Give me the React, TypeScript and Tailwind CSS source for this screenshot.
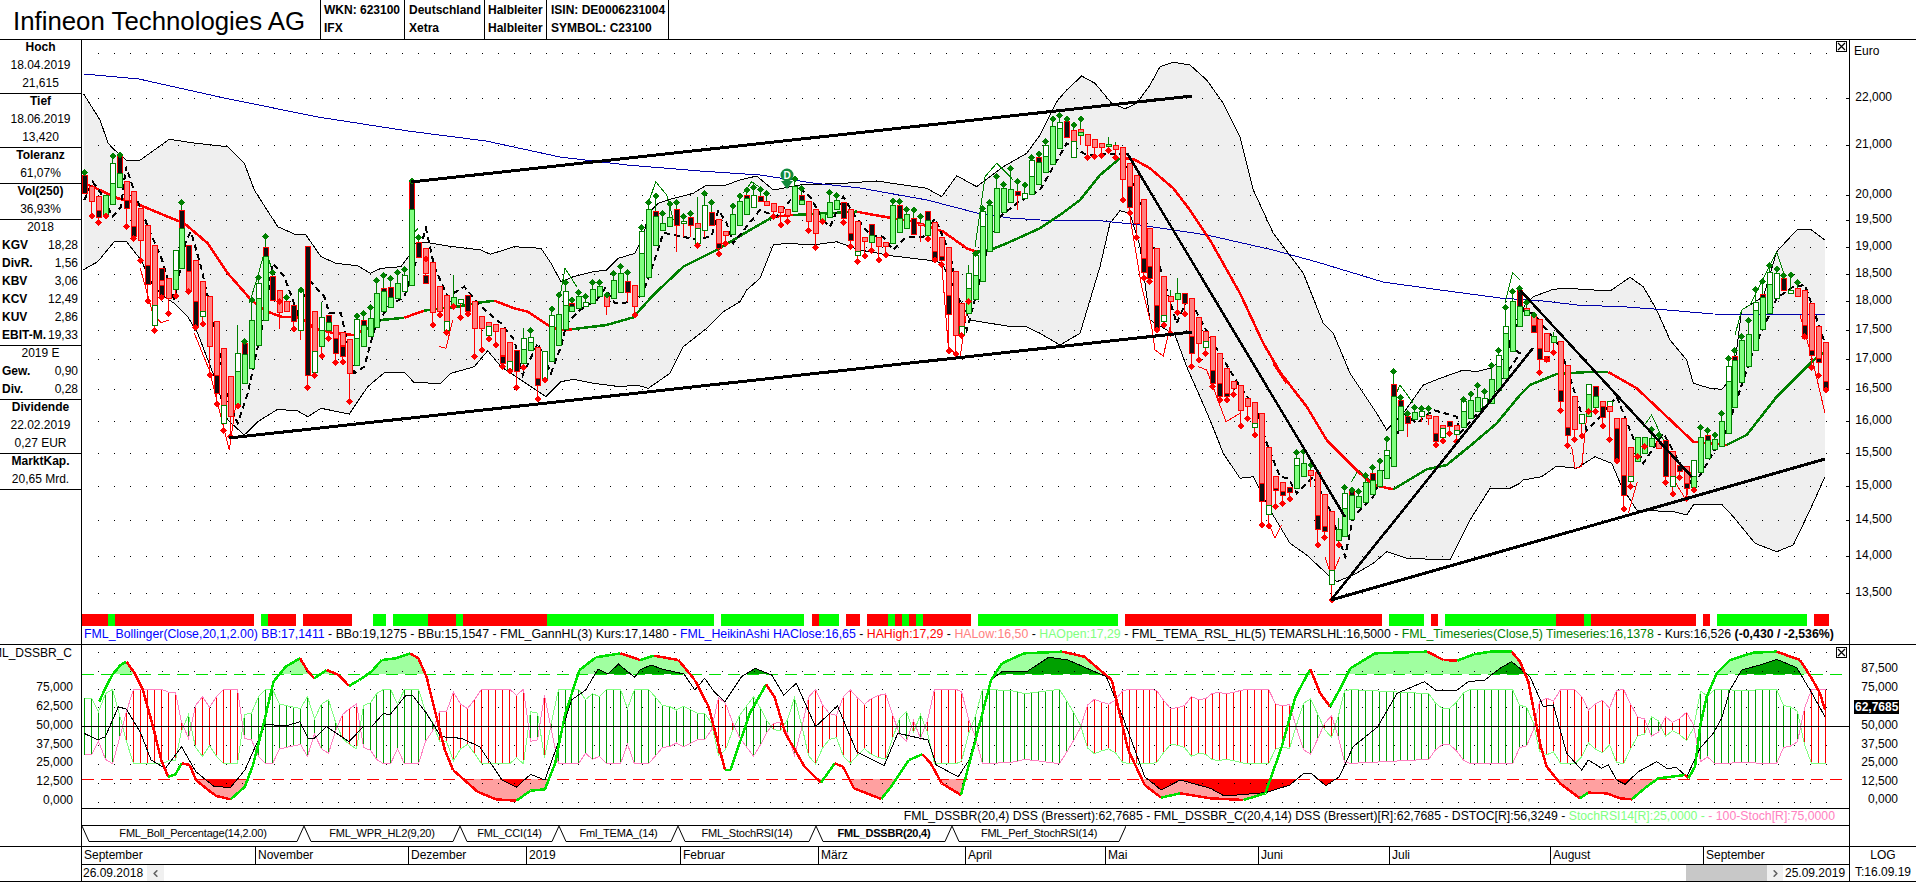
import { ChevronLeft, ChevronRight } from 'lucide-react';

type Pt = [number, number];

// readings were taken from crops, so every series carries its crop origin and scale
const Z = (ox: number, oy: number, sx: number, sy: number) => (p: number[]): Pt[] => {
  const out: Pt[] = [];
  for (let i = 0; i < p.length; i += 2) out.push([ox + p[i] / sx, oy + p[i + 1] / sy]);
  return out;
};
const z1 = Z(0, 0, 2.45, 3);
const z2 = Z(0, 220, 2.45, 3);
const z3 = Z(0, 590, 2.45, 3);
const z4 = Z(1500, 590, 3, 3);
const z5 = Z(640, 600, 1.823, 3);
const z6 = Z(1500, 200, 3, 3);
const z7 = Z(81, 100, 3, 3);
const z8 = Z(560, 80, 3, 3);
const z9 = Z(1040, 60, 3, 3);
const z10 = Z(1040, 300, 3, 3);

const pts = (l: Pt[]) => l.map(([x, y]) => `${x.toFixed(1)},${y.toFixed(1)}`).join(' ');

const upperBand: Pt[] = [
  ...z1([205, 282, 245, 360, 265, 430]),
  ...z7([95, 145, 135, 180, 178, 180, 265, 118, 345, 130, 440, 140, 490, 190, 520, 270, 590, 380, 640, 402, 675, 405, 720, 470, 765, 490, 830, 497, 868, 520, 900, 505, 960, 500, 990, 460, 1000, 430, 1040, 428, 1100, 438, 1200, 450, 1228, 463, 1300, 440, 1380, 445, 1410, 490, 1440, 545]),
  ...z8([40, 590, 100, 575, 140, 570, 175, 535, 225, 520, 250, 470, 265, 400, 295, 370, 330, 358, 400, 340, 440, 315, 490, 318, 540, 300, 590, 288, 640, 330, 720, 315, 850, 310, 950, 303, 1100, 325, 1145, 350, 1190, 287, 1250, 320, 1330, 260, 1400, 220, 1440, 165]),
  ...z9([50, 125, 80, 90, 125, 48, 165, 70, 215, 130, 255, 146, 290, 130, 330, 75, 360, 20, 400, 7, 450, 15, 500, 60, 550, 130, 600, 230, 640, 390, 700, 520, 790, 640, 850, 790, 880, 820, 930, 940, 1010, 1060]),
  ...z10([1040, 390, 1090, 340, 1150, 255, 1200, 235, 1270, 210, 1310, 215, 1350, 205, 1400, 170]),
  [1510, 340],
  [1525, 305],
  ...z6([100, 290, 160, 268, 200, 265, 330, 273, 390, 232, 430, 260, 470, 330, 510, 420, 560, 480, 580, 550, 630, 565, 665, 568, 700, 530, 725, 330, 790, 290, 830, 155, 890, 90, 930, 87, 975, 120]),
];

const lowerBand: Pt[] = [
  ...z2([207, 148]),
  ...z7([10, 508, 50, 485, 100, 425, 135, 423, 180, 480, 215, 555, 250, 590, 280, 610, 320, 650, 350, 700, 400, 830, 440, 960, 490, 1005, 530, 965, 590, 928, 650, 933, 680, 950, 720, 925, 805, 942, 860, 860, 910, 818, 970, 817, 1000, 848, 1080, 850, 1110, 820, 1180, 800, 1220, 752, 1260, 800, 1320, 840, 1395, 890, 1440, 845]),
  ...z8([40, 898, 100, 910, 180, 920, 230, 915, 265, 925, 330, 880, 370, 800, 440, 745, 490, 695, 540, 665, 560, 630, 600, 595, 640, 495, 680, 490, 760, 495, 830, 485, 900, 510, 1000, 528, 1100, 540, 1145, 548, 1230, 720, 1340, 738, 1395, 738, 1440, 760]),
  ...z9([60, 855, 120, 820, 150, 720, 180, 620, 210, 490, 240, 452, 270, 460, 300, 560, 330, 780, 405, 825, 440, 920, 480, 1010, 510, 1080]),
  ...z10([550, 460, 600, 535, 640, 530, 690, 630, 750, 730, 800, 765, 870, 830, 890, 845, 940, 825, 1000, 790, 1040, 755, 1100, 775, 1230, 780, 1290, 660, 1350, 565, 1410, 565, 1440, 550]),
  ...z6([70, 840, 125, 830, 170, 798, 230, 805, 285, 770, 335, 790, 365, 860, 410, 930, 520, 935, 560, 945, 580, 915, 665, 913, 700, 950, 765, 1030, 830, 1055, 880, 1035, 930, 930, 975, 830]),
];

const blueLine: Pt[] = [
  [84, 74], [139, 79], [224, 98], [318, 117], [408, 131], [486, 141], [560, 157], [627, 165], [700, 171], [760, 175],
  [813, 183], [860, 188], [927, 200], [977, 213], [1010, 218], [1040, 220], [1103, 221], [1140, 225], [1207, 235],
  [1273, 250], [1317, 262], [1383, 282], [1440, 290], [1500, 298], [1543, 301], [1577, 305], [1627, 307], [1667, 310],
  [1713, 314], [1825, 315],
];

const dashed: Pt[] = [
  ...z7([10, 300, 35, 245, 60, 280, 95, 350, 120, 320, 135, 200, 165, 290, 200, 380, 240, 470, 280, 600, 315, 420, 330, 395, 360, 500, 405, 700, 440, 900, 470, 970, 500, 880, 550, 650, 575, 490, 610, 530, 650, 640, 685, 540, 730, 590, 745, 640, 780, 640, 820, 820, 850, 800, 880, 690, 920, 620, 970, 590, 1000, 500, 1035, 385, 1060, 500, 1100, 590, 1150, 560, 1200, 620, 1260, 670, 1300, 720, 1325, 825, 1370, 730, 1410, 820, 1440, 740]),
  ...z8([20, 730, 60, 690, 110, 660, 135, 625, 165, 670, 230, 665, 260, 610, 300, 490, 310, 458, 370, 470, 400, 478, 455, 470, 475, 390, 500, 430, 520, 490, 600, 390, 650, 410, 720, 325, 750, 350, 790, 420, 810, 440, 850, 350, 880, 400, 930, 465, 970, 470, 1000, 510, 1040, 470, 1090, 470, 1125, 415, 1170, 520, 1200, 680, 1220, 750, 1250, 640, 1290, 470, 1320, 410, 1370, 370, 1440, 330]),
  ...z9([80, 250, 140, 285, 240, 280, 290, 400, 320, 490, 380, 690, 410, 790, 440, 720]),
  ...z10([450, 0, 520, 130, 600, 260, 650, 330, 680, 430, 720, 530, 745, 535, 770, 580, 820, 530, 870, 630, 915, 770, 940, 650, 1000, 590, 1060, 450, 1090, 340, 1130, 370, 1180, 330, 1250, 350, 1260, 400, 1340, 310, 1440, 160]),
  ...z6([30, 440, 60, 330, 100, 340, 180, 440, 260, 690, 300, 650, 350, 590, 430, 790, 490, 700, 580, 860, 680, 690, 760, 450, 830, 295, 880, 260, 915, 255, 975, 430]),
];

const R = '#ff0000';
const G = '#008000';
const maRuns: [string, Pt[]][] = [
  [R, z7([10, 250, 45, 265, 110, 295, 150, 305, 200, 325, 260, 350, 310, 370, 380, 430, 440, 520, 480, 565, 510, 600, 560, 635, 600, 650, 660, 653, 700, 685, 760, 700, 820, 705, 850, 690])],
  [G, z7([850, 690, 900, 660, 970, 653])],
  [R, z7([970, 653, 1030, 632])],
  [G, z7([1030, 632, 1080, 625, 1130, 620, 1180, 610, 1240, 602])],
  [R, [...z7([1240, 602, 1300, 625, 1340, 635, 1400, 675]), ...z8([0, 750, 35, 748])]],
  [G, z8([35, 748, 140, 735, 220, 712, 280, 645, 370, 560, 470, 510, 570, 450, 640, 410])],
  [R, z8([640, 410, 700, 405])],
  [G, z8([700, 405, 800, 400, 890, 395])],
  [R, z8([890, 395, 960, 408, 1060, 425, 1150, 455, 1220, 505, 1250, 515])],
  [G, [...z8([1250, 515, 1290, 510, 1340, 490, 1440, 445]), ...z9([60, 465, 120, 420, 180, 345, 240, 295])]],
  [R, [...z9([240, 295, 280, 297, 330, 325, 400, 385, 450, 450, 510, 540, 600, 700, 670, 850, 740, 970]), ...z10([700, 190, 800, 320, 860, 420, 960, 520, 1000, 555, 1060, 568])]],
  [G, [...z10([1060, 568, 1160, 508, 1220, 495, 1300, 430, 1370, 370, 1440, 285]), ...z6([90, 555, 170, 522, 280, 515, 325, 516])]],
  [R, z6([325, 516, 410, 565, 490, 640, 580, 725, 680, 735])],
  [G, z6([680, 735, 740, 705, 830, 590, 930, 490, 970, 458])],
];

const thinRuns: [string, Pt[]][] = [
  [R, z7([178, 505, 215, 640, 240, 668, 265, 660])],
  [R, z7([340, 700, 385, 810, 445, 1050, 470, 875])],
  [G, z7([505, 610, 530, 530, 553, 445, 570, 500])],
  [R, z7([1075, 740, 1095, 745, 1115, 660])],
  [G, z7([990, 405, 1012, 385])],
  [G, z8([0, 650, 15, 565, 50, 620])],
  [G, z8([265, 370, 287, 305, 320, 345, 340, 420])],
  [G, z8([550, 340, 575, 305, 610, 330])],
  [R, z8([1145, 550, 1165, 800, 1200, 835, 1225, 660])],
  [G, z8([1245, 500, 1275, 290, 1310, 250, 1360, 300])],
  [R, z9([270, 470, 305, 680, 335, 800, 345, 870, 370, 888, 390, 800])],
  [R, z10([475, 200, 500, 210, 530, 290, 558, 365, 600, 340])],
  [R, z10([690, 680, 705, 715, 725, 675])],
  [G, z10([935, 545, 955, 510, 990, 540])],
  [R, z10([855, 770, 875, 830, 900, 770])],
  [G, z10([1060, 300, 1080, 255, 1120, 310])],
  [G, z9([1395, 730, 1418, 638, 1440, 660])],
  [R, z6([215, 740, 225, 805, 245, 800, 265, 600])],
  [R, z6([385, 940, 412, 845])],
  [R, z6([525, 845, 558, 900, 580, 780])],
  [G, z6([705, 405, 725, 330, 750, 315, 785, 245, 830, 155, 850, 215])],
  [R, z6([900, 345, 935, 470, 975, 640])],
  [G, z6([430, 680, 455, 645, 490, 720])],
];

const trendLines: [Pt, Pt, number][] = [
  [[229, 438], [1192, 332], 3],
  [[411, 182], [1192, 96], 3],
  [[1127, 153], [1345, 517], 2.5],
  [[1331, 600], [1533, 348], 2.5],
  [[1331, 600], [1825, 459], 3],
  [[1520, 290], [1692, 477], 2.5],
];

// one entry per trading day: marker y, then r/g/h/k body ranges and an optional w wick end
const barSections: [number, string][] = [
  [100, '218 k225-280|348 r258-305|368 r288-352 k330-352|348 g285-345|168 h190-250 g250-312|165 k170-220 g220-262|380 r245-325 k300-325|416 r275-410 k380-410|482 r325-420|603 r376-553 k495-553|692 r435-615 h615-675|593 r505-585 k505-540 k555-585|640 r535-595|588 h450-510 g510-568|308 k332-385 g385-505|575 k436-515 r515-570|682 r480-605 k605-680|672 r545-635 h635-650|825 r590-740|912 r665-825 k825-880|992 r745-915 h915-970|1010 r828-950|918 h760-815 g815-915 w675|725 k730-763 g763-850|600 g660-805|533 h550-595 g595-735|410 k442-470 g470-660|517 k530-600|605 r572-637 w688|593 r605-635|687 k615-665|570 h575-690 w720|863 k440-825|827 r635-755 h755-818|768 h652-690 g690-740 w605|715 k645-668 g668-690|788 r675-715 k715-760|786 r698-735 k740-768|905 r718-820|648 h658-715 g715-795|640 k660-675 g676-740|623 g655-708|542 g580-682|527 k565-575 g575-633|536 k562-592 g592-622|518 g550-595|508 h525-575|243 k245-328 g328-556|413 k427-472|477 r445-520 k525-550|675 r487-637|645 r560-635|698 r585-665 h665-690|620 g592-615 w525|653 h598-610|642 k585-635|770 r605-685|750 r648-685|717 r667-680 h680-705|735 r673-695|800 r685-765 k768-790|813 r727-785 h785-810|863 k752-815|803 h715-748 g748-790 w685|692 h712-727 g727-750|897 r742-835 k835-855|840 h755-838|627 h645-678 g678-785|585 g643-735'],
  [80, '607 h635-675 g675-748|660 k670-680 g680-695|638 g650-685|650 h668-680|607 g628-670|607 g620-650|645 r650-680 w705|580 g600-655|560 g580-638|578 k605-638 w665|705 r617-680|443 h455-520 g520-650|368 g388-592|348 k395-410 g410-497|400 g430-452|372 g412-440|368 k388-437 w515|410 h425-430 w470|400 k412-437 w470|497 r430-445 h445-490 w350|340 h376-450 w470|368 k398-437|522 r418-490 k490-505|490 r455-467|378 g403-462|348 g365-437|330 k347-355 g355-403|322 h347-383|328 k350-365|340 r365-375|410 r370-395|435 r378-398|425 r388-405|297 g320-395|325 k347-360 g360-372|452 r365-425|503 r388-460|425 g400-420|338 g367-412|347 g362-388|428 k368-415|500 r388-460 k460-480|545 r425-515 h515-525|528 r472-485|512 k433-465 g465-487|540 r472-500|525 r487-500|363 g375-490|365 k375-415 g415-458|388 g402-445|390 k415-462|410 r430-437 w485|477 k395-420 g420-465|540 r428-515 k515-535|553 r472-530 k530-540|813 r502-645 k645-703|822 r575-767|767 r670-740 h740-765|665 h580-625 g625-700 w555|520 h525-585 g585-658|385 h395-440 g440-605|367 g375-515|290 g325-457|313 g325-397|266 g328-368|305 k335-345 w390|315 h340-355|232 h240-290 g290-343|222 k232-247 g247-312'],
  [60, '245 h255-290 g290-337|177 g200-313|167 h187-205 g205-265|177 k185-232|195 r210-245 h245-292|177 r208-218 g218-225 w255|293 r222-257|290 r238-262|287 r250-263|272 g253-258 w232|293 r257-268 w245|420 r262-358|459 r310-380 k380-442|533 r345-490|654 r418-595 k595-637|665 r505-620 k620-655|810 r565-735 k735-805|795 r649-765 h765-785|820 r708-725 w690|758 g700-717 w655|762 k700-730|920 r715-830 k830-880|900 r772-850|880 r815-845 h845-863'],
  [300, '260 r108-210 k210-250|300 r160-250 k250-290|300 r205-280 k280-290|283 r245-265|378 r257-330|356 r295-320|405 r307-370 h370-383|675 r340-550 k550-605|678 r442-617 h617-643|620 r530-565 k565-570|611 r547-575 k575-585|597 k563-578|457 h475-495 g495-565|455 g490-530|495 r510-525 w560|735 r517-647 k647-688|713 r583-680 k680-695|900 r635-810 h810-853|735 g688-722 w655|563 h580-625 g625-708|570 k575-585 g585-658|575 g590-622|527 g548-607|502 k520-540 g540-583|483 g512-560|417 h450-467 g467-535|215 k253-290 g290-498|293 k300-320 g320-390|340 k348-370 w412|323 g338-358|325 h335-348 w365|326 r345-355 w375|435 r350-400 k400-425|423 r375-385 h385-413|400 k365-378|425 r375-390 h390-403|298 h305-335 g335-382|282 g300-355|257 g293-335|275 h295-320|197 g238-310|152 h165-200 g200-270'],
  [200, '323 h380-400 g400-535|275 g305-455|265 k272-318 g318-380|308 r325-330 g330-347|345 r350-375 k375-397|518 r358-445 k445-478|478 r400-455 k470-485|458 g410-428 w395|632 r425-572 k572-605|737 r497-683 k683-705|718 r590-688|708 h642-670|635 h553-583 g583-650|635 k560-590 g590-622|678 r605-620 k620-652|718 h605-620 r620-635|783 r655-685 k685-785|927 r655-825 k825-885|860 r742-830 h830-843|770 g712-783|740 g712-760|688 g715-738|705 r725-745|848 k720-828|882 r755-830 h830-860|833 k795-815|895 r800-850 k850-865|870 h780-830 g830-862|683 g713-817|692 k705-722 g722-775|705 g717-748|640 g663-738|475 h500-545 g545-700|452 k470-480 g480-622|410 g420-547|362 g402-498|268 h308-330 g330-450|245 k283-292 g292-388|197 h218-253 g253-340|207 h220-295|227 k235-272|225 h270-280|248 r265-290|410 r270-375 k375-415|503 r310-450 k450-465|527 r378-475 k475-488|570 r427-545 k545-570'],
];

const barX = (i: number) => 84 + i * 6.964;

type Seg = { kind: string; t: number; b: number };
type Bar = { x: number; marker: number; wick?: number; segs: Seg[]; top: number; bot: number };

const bars: Bar[] = [];
barSections.forEach(([oy, str]) => {
  str.split('|').forEach((entry) => {
    const [m, ...tok] = entry.split(' ');
    const segs: Seg[] = [];
    let wick: number | undefined;
    tok.forEach((t) => {
      if (t[0] === 'w') wick = oy + Number(t.slice(1)) / 3;
      else {
        const [a, b] = t.slice(1).split('-').map(Number);
        segs.push({ kind: t[0], t: oy + a / 3, b: oy + b / 3 });
      }
    });
    bars.push({
      x: Math.round(barX(bars.length)) + 0.5,
      marker: oy + Number(m) / 3,
      wick,
      segs,
      top: Math.min(...segs.map((s) => s.t)),
      bot: Math.max(...segs.map((s) => s.b)),
    });
  });
});

const segStyle: Record<string, [string, string]> = {
  r: ['#ff8080', R],
  g: ['#80ff80', G],
  h: ['#ffffff', G],
  k: ['#101010', R],
};

const priceY = (p: number) => 98 + 1013 * Math.log(22000 / p);
const priceTicks = [22000, 21000, 20000, 19500, 19000, 18500, 18000, 17500, 17000, 16500, 16000, 15500, 15000, 14500, 14000, 13500];
const priceLabel = (p: number) => `${Math.floor(p / 1000)},${String(p % 1000).padStart(3, '0')}`;

const dotPath = (rows: number[]) => {
  let d = '';
  rows.forEach((y) => {
    for (let x = 98; x < 1840; x += 16) d += `M${x} ${Math.round(y)}h1v1h-1z`;
  });
  return d;
};

const mainDots = dotPath([53, ...priceTicks.map(priceY)]);

const statusBar: [number, number, string][] = [
  [82, 108, 'r'], [108, 115, 'g'], [115, 254, 'r'], [261, 268, 'g'], [268, 296, 'r'], [303, 352, 'r'], [373, 386, 'g'], [393, 428, 'g'],
  [428, 456, 'r'], [456, 463, 'g'], [463, 547, 'r'], [547, 640, 'g'], [640, 714, 'g'], [721, 804, 'g'], [812, 819, 'r'], [819, 839, 'g'],
  [846, 860, 'r'], [867, 888, 'r'], [888, 895, 'g'], [895, 902, 'r'], [902, 909, 'g'], [909, 916, 'r'], [916, 923, 'g'], [923, 971, 'r'],
  [978, 1118, 'g'], [1125, 1382, 'r'], [1389, 1424, 'g'], [1431, 1438, 'r'], [1445, 1556, 'g'], [1556, 1584, 'r'], [1584, 1591, 'g'],
  [1591, 1696, 'r'], [1703, 1710, 'r'], [1717, 1807, 'g'], [1814, 1829, 'r'],
];

// lower pane
const oscY = (v: number) => 726.5 - v * 1.49;
const oscTicks: [string, number][] = [['75,000', 687], ['62,500', 706], ['50,000', 725], ['37,500', 744], ['25,000', 762], ['12,500', 781], ['0,000', 800]];
const oscTicksRight: [string, number][] = [['87,500', 668], ['75,000', 687], ['50,000', 725], ['37,500', 744], ['25,000', 762], ['12,500', 781], ['0,000', 799]];
const oscDots = dotPath([652, 671, 689, 707, 726, 745, 764, 783, 802]);

const thick: Pt[] = [
  ...z3([243, 335, 258, 295, 275, 255, 295, 225, 310, 215, 330, 250, 350, 300, 375, 410, 395, 510, 412, 560, 430, 553, 445, 520, 465, 525, 480, 570, 510, 600, 530, 618, 565, 628, 600, 590, 620, 525, 650, 380, 670, 275, 700, 230, 735, 205, 755, 245, 770, 265, 800, 240, 830, 255, 855, 288, 880, 270, 910, 245, 935, 210, 970, 205, 1005, 190, 1025, 205, 1045, 260, 1065, 360, 1090, 480, 1110, 540, 1170, 605, 1215, 628, 1265, 632, 1300, 602, 1335, 598, 1360, 520, 1385, 370, 1420, 240, 1460, 202, 1520, 190]),
  ...z5([0, 180, 25, 167, 70, 180, 100, 240, 125, 320, 155, 510, 165, 510, 200, 340, 230, 253, 245, 290, 265, 400, 300, 500, 330, 548, 355, 490, 370, 500, 390, 565, 440, 597, 460, 555, 490, 480, 515, 463, 530, 490, 550, 550, 585, 585, 610, 430, 640, 240, 660, 190, 700, 160, 770, 155, 810, 170, 860, 240, 890, 450, 920, 555, 950, 593, 985, 580, 1040, 595, 1100, 600, 1140, 580, 1170, 440, 1195, 290, 1222, 207, 1240, 280, 1258, 320, 1275, 270, 1295, 205, 1340, 160, 1435, 155, 1465, 180, 1490, 182, 1520, 163, 1550, 155]),
  ...z4([0, 185, 35, 185, 60, 215, 85, 275, 120, 460, 140, 530, 180, 580, 240, 625, 265, 608, 320, 610, 360, 625, 395, 628, 440, 590, 475, 565, 555, 555, 565, 565, 585, 530, 600, 410, 620, 320, 650, 250, 690, 210, 760, 188, 830, 185, 900, 210, 935, 265, 960, 310, 975, 360]),
];

const thinBlack: Pt[] = [
  ...z3([206, 430, 240, 450, 258, 440, 290, 350, 310, 358, 345, 430, 370, 510, 405, 535, 445, 470, 480, 545, 525, 590, 565, 592, 600, 540, 650, 403, 700, 408, 735, 395, 755, 445, 770, 445, 800, 410, 855, 455, 890, 410, 910, 410, 940, 370, 955, 375, 995, 315, 1010, 315, 1045, 370, 1080, 440, 1130, 445, 1175, 470, 1230, 570, 1265, 592, 1300, 553, 1335, 570, 1370, 450, 1400, 330, 1435, 300, 1465, 237, 1490, 252, 1515, 222, 1555, 262]),
  ...z5([0, 210, 20, 195, 40, 207, 80, 222, 100, 270, 118, 235, 135, 275, 155, 305, 185, 230, 210, 205, 240, 225, 262, 285, 285, 250, 320, 380, 360, 318, 395, 455, 445, 497, 470, 400, 525, 420, 540, 495, 580, 530, 600, 480, 640, 240, 660, 215, 705, 215, 745, 172, 780, 180, 850, 230, 880, 350, 920, 530, 950, 570, 985, 540, 1040, 565, 1065, 588, 1140, 578, 1185, 555, 1210, 520, 1225, 522, 1250, 557, 1275, 530, 1300, 440, 1345, 380, 1380, 280, 1430, 245, 1450, 270, 1490, 270, 1510, 245, 1540, 240]),
  ...z4([0, 235, 35, 215, 90, 260, 130, 350, 160, 345, 200, 490, 245, 540, 265, 510, 305, 535, 325, 525, 350, 570, 375, 583, 415, 545, 470, 515, 500, 535, 530, 533, 560, 560, 600, 475, 640, 430, 665, 385, 690, 300, 725, 240, 790, 222, 830, 208, 890, 233, 930, 300, 975, 380]),
];

const ampHead = [19, 19, 10, 22, 25, 8, -10, -25, -25, -25, -25, -25, -23, -23, -3, 8, -14, -20, -13, -20, -25, -25, -25, 8, 9, 20, 25, 25, 15, 14, 13, 12, 20, 5, 15, 18, 3, -8, -12, -15, 14, 16, 22, 25, 25, 15, 25, 25, 25, 10, 3, -10, -10, -23, -15, -12, -18, -25, -25, -25, -25, -25, -21, -25, 10, 9, -21, 3, 25, 25, 25, 25, 18, 22, 20, 25, 25, 25, 12, 25];
const ampAnchors: Pt[] = [
  ...[0, 25, 25, 25, 30, 14, 50, 14, 65, 11, 80, 14, 100, 9, 125, 9, 145, -25, 155, -15, 175, 5, 205, 20, 225, 8, 240, -2, 262, -3, 282, 20, 295, 0, 310, -25, 320, -25, 335, -12, 355, -5, 372, -22, 385, -25, 405, -14, 425, -20, 447, -22, 462, -5, 470, 5, 485, 10, 497, -4, 510, 8, 522, -3, 535, -25, 585, -25, 600, -3, 610, 5, 623, 25, 680, 24, 700, 22, 765, 25, 780, 15, 800, 3, 815, -15, 830, -19, 845, -15, 860, -15, 880, -25, 940, -25, 965, -12, 990, -13, 1005, -20, 1025, -17, 1045, -23, 1075, -22, 1100, -25, 1145, -25, 1160, -13, 1185, -15, 1200, 8, 1215, 22, 1225, 16, 1240, 3, 1250, -5, 1262, -8, 1272, 8, 1285, 25, 1440, 22, 1455, 12, 1480, 12, 1497, 22, 1510, 25, 1550, 25].reduce<Pt[]>((a, v, i, l) => (i % 2 ? a : [...a, [640 + v / 1.823, l[i + 1]]]), []),
  ...[15, 25, 37, 25, 58, 13, 80, 13, 98, 2, 120, -18, 140, -19, 160, -17, 182, -25, 225, -25, 245, -20, 265, -11, 285, -15, 305, -18, 328, -12, 350, -25, 372, -25, 392, -14, 412, -6, 434, -5, 455, 8, 477, 3, 497, -8, 518, -2, 540, -6, 560, -10, 580, 0, 600, 25, 622, 20, 642, 25, 685, 25, 705, 24, 830, 25, 850, 14, 872, 13, 893, 10, 912, -12, 934, -25, 975, -25].reduce<Pt[]>((a, v, i, l) => (i % 2 ? a : [...a, [1500 + v / 3, l[i + 1]]]), []),
];
const ampAt = (i: number) => {
  if (i < ampHead.length) return ampHead[i];
  const x = barX(i);
  for (let k = 1; k < ampAnchors.length; k++) {
    const [x0, a0] = ampAnchors[k - 1];
    const [x1, a1] = ampAnchors[k];
    if (x <= x1) return a0 + ((a1 - a0) * (x - x0)) / (x1 - x0);
  }
  return ampAnchors[ampAnchors.length - 1][1];
};
const amps = Array.from({ length: 251 }, (_, i) => ({ x: Math.round(barX(i)) + 0.5, a: ampAt(i) }));

const closeTo = (l: Pt[], base: number): Pt[] => [[l[0][0], base], ...l, [l[l.length - 1][0], base]];

const tabs = [
  { label: 'FML_Boll_Percentage(14,2.00)', w: 222 },
  { label: 'FML_WPR_HL2(9,20)', w: 156 },
  { label: 'FML_CCI(14)', w: 99 },
  { label: 'Fml_TEMA_(14)', w: 119 },
  { label: 'FML_StochRSI(14)', w: 138 },
  { label: 'FML_DSSBR(20,4)', w: 136, bold: true },
  { label: 'FML_Perf_StochRSI(14)', w: 174 },
];

const months = [
  { label: 'September', w: 174 },
  { label: 'November', w: 153 },
  { label: 'Dezember', w: 118 },
  { label: '2019', w: 154 },
  { label: 'Februar', w: 138 },
  { label: 'März', w: 147 },
  { label: 'April', w: 140 },
  { label: 'Mai', w: 153 },
  { label: 'Juni', w: 131 },
  { label: 'Juli', w: 161 },
  { label: 'August', w: 153 },
  { label: 'September', w: 145 },
];

const sideRows: { h: string; rows: (string | [string, string] | { b: string })[] }[] = [
  { h: 'h-[54px]', rows: [{ b: 'Hoch' }, '18.04.2019', '21,615'] },
  { h: 'h-[54px]', rows: [{ b: 'Tief' }, '18.06.2019', '13,420'] },
  { h: 'h-[36px]', rows: [{ b: 'Toleranz' }, '61,07%'] },
  { h: 'h-[36px]', rows: [{ b: 'Vol(250)' }, '36,93%'] },
  { h: 'h-[126px]', rows: ['2018', ['KGV', '18,28'], ['DivR.', '1,56'], ['KBV', '3,06'], ['KCV', '12,49'], ['KUV', '2,86'], ['EBIT-M.', '19,33']] },
  { h: 'h-[54px]', rows: ['2019 E', ['Gew.', '0,90'], ['Div.', '0,28']] },
  { h: 'h-[54px]', rows: [{ b: 'Dividende' }, '22.02.2019', '0,27 EUR'] },
  { h: 'h-[36px]', rows: [{ b: 'MarktKap.' }, '20,65 Mrd.'] },
];

const SideCell = ({ row }: { row: string | [string, string] | { b: string } }) => {
  if (typeof row === 'string') return <div className="h-[18px] leading-[18px] text-center">{row}</div>;
  if (Array.isArray(row))
    return (
      <div className="h-[18px] leading-[18px] flex justify-between pl-[2px] pr-[3px]">
        <span className="font-bold">{row[0]}</span>
        <span>{row[1]}</span>
      </div>
    );
  return <div className="h-[18px] leading-[18px] text-center font-bold">{row.b}</div>;
};

const CloseBox = () => (
  <svg width="11" height="11" viewBox="0 0 11 11" className="absolute right-[1px] block">
    <rect x="0.5" y="0.5" width="10" height="10" fill="#fff" stroke="#000" />
    <path d="M2 2L9 9M9 2L2 9" stroke="#000" strokeWidth="1.2" />
  </svg>
);

const PriceChart = () => (
  <svg width="1767" height="574" viewBox="82 40 1767 574" className="block" shapeRendering="crispEdges">
    <polygon points={pts([...upperBand, ...[...lowerBand].reverse()])} fill="#efefef" />
    <path d={mainDots} fill="#000" />
    <polyline points={pts(upperBand)} fill="none" stroke="#000" strokeWidth="1" />
    <polyline points={pts(lowerBand)} fill="none" stroke="#000" strokeWidth="1" />
    <polyline points={pts(blueLine)} fill="none" stroke="#0000a8" strokeWidth="1" />
    {priceTicks.map((p) => (
      <rect key={p} x="1846" y={Math.round(priceY(p))} width="3" height="1" fill="#000" />
    ))}
    {thinRuns.map(([c, l], i) => (
      <polyline key={i} points={pts(l)} fill="none" stroke={c} strokeWidth="1" />
    ))}
    {maRuns.map(([c, l], i) => (
      <polyline key={i} points={pts(l)} fill="none" stroke={c} strokeWidth="2.5" />
    ))}
    <polyline points={pts(dashed)} fill="none" stroke="#000" strokeWidth="2" strokeDasharray="6 4" />
    {bars.map((b, i) => {
      const above = b.marker < b.top;
      const col = above ? G : R;
      return (
        <g key={i}>
          <line x1={b.x} x2={b.x} y1={above ? b.top : b.bot} y2={b.marker} stroke={col} />
          {b.wick !== undefined && (
            <line x1={b.x} x2={b.x} y1={b.wick < b.top ? b.top : b.bot} y2={b.wick} stroke={b.wick < b.top ? G : R} />
          )}
          {b.segs.map((s, k) => (
            <rect key={k} x={b.x - 2.5} y={s.t} width="5" height={Math.max(s.b - s.t, 1)} fill={segStyle[s.kind][0]} stroke={segStyle[s.kind][1]} />
          ))}
          <path d={`M${b.x} ${b.marker - 3.5}L${b.x + 3.5} ${b.marker}L${b.x} ${b.marker + 3.5}L${b.x - 3.5} ${b.marker}Z`} fill={col} />
        </g>
      );
    })}
    {trendLines.map(([a, b, w], i) => (
      <line key={i} x1={a[0]} y1={a[1]} x2={b[0]} y2={b[1]} stroke="#000" strokeWidth={w} />
    ))}
    <g shapeRendering="auto">
      <path d="M781 181L787 189L793 181Z" fill="#118a3c" />
      <circle cx="787" cy="175" r="6.5" fill="#118a3c" />
      <text x="787" y="178.5" textAnchor="middle" fontSize="10" fontWeight="700" fill="#fff" fontFamily="Liberation Sans, sans-serif">
        D
      </text>
    </g>
  </svg>
);

const OscChart = () => {
  const upper: Pt[] = amps.map((b) => [b.x, oscY(b.a)]);
  const lower: Pt[] = amps.map((b) => [b.x, oscY(-b.a)]);
  return (
    <svg width="1767" height="163" viewBox="82 645 1767 163" className="block" shapeRendering="crispEdges">
      <defs>
        <clipPath id="above">
          <rect x="82" y="645" width="1767" height="29" />
        </clipPath>
        <clipPath id="below">
          <rect x="82" y="779" width="1767" height="29" />
        </clipPath>
      </defs>
      <g clipPath="url(#above)" shapeRendering="auto">
        <polygon points={pts(closeTo(thick, 674))} fill="#a0ffa0" />
        <polygon points={pts(closeTo(thinBlack, 674))} fill="#00a000" />
      </g>
      <g clipPath="url(#below)" shapeRendering="auto">
        <polygon points={pts(closeTo(thick, 779))} fill="#ffa0a0" />
        <polygon points={pts(closeTo(thinBlack, 779))} fill="#ff0000" />
      </g>
      <path d={oscDots} fill="#000" />
      {amps.map((b, i) => (
        <line key={i} x1={b.x} x2={b.x} y1={oscY(Math.abs(b.a))} y2={oscY(-Math.abs(b.a))} stroke={b.a >= 0 ? '#00a000' : '#ff0000'} />
      ))}
      <polyline points={pts(upper)} fill="none" stroke="#80ff80" />
      <polyline points={pts(lower)} fill="none" stroke="#ff80c0" />
      <line x1="82" x2="1849" y1="674.5" y2="674.5" stroke="#00e000" strokeDasharray="12 7" />
      <line x1="82" x2="1849" y1="779.5" y2="779.5" stroke="#ff0000" strokeDasharray="12 7" />
      <line x1="82" x2="1849" y1="726.5" y2="726.5" stroke="#000" />
      <polyline points={pts(thinBlack)} fill="none" stroke="#000" />
      {thick.slice(1).map((p, i) => {
        const q = thick[i];
        return <line key={i} x1={q[0]} y1={q[1]} x2={p[0]} y2={p[1]} stroke={p[1] <= q[1] ? '#00e000' : '#ff0000'} strokeWidth="2.5" />;
      })}
    </svg>
  );
};

const Tab = ({ label, w, bold }: { label: string; w: number; bold?: boolean }) => (
  <div className="relative h-[15px] flex-none text-center text-[11px] leading-[14px] tracking-[-0.2px]" style={{ width: w }}>
    <svg width={w} height="16" viewBox={`0 0 ${w} 16`} className="absolute left-0 top-0">
      <polyline points={`0,0 7,15.5 ${w - 7},15.5 ${w},0`} fill="none" stroke="#000" />
    </svg>
    <span className={bold ? 'relative font-bold' : 'relative'}>{label}</span>
  </div>
);

export default function App() {
  return (
    <div className="w-[1916px] h-[882px] overflow-hidden bg-white text-black text-[12px] font-['Liberation_Sans',Arial,sans-serif]">
      {/* title bar */}
      <div className="flex h-[40px] border-b border-black">
        <div className="w-[321px] border-r border-black pl-[13px] text-[25.8px] leading-[42px]">Infineon Technologies AG</div>
        <div className="w-[84px] border-r border-black pl-[3px] font-bold leading-[18px] pt-[1px]">
          <div>WKN: 623100</div>
          <div>IFX</div>
        </div>
        <div className="w-[80px] border-r border-black pl-[4px] font-bold leading-[18px] pt-[1px]">
          <div>Deutschland</div>
          <div>Xetra</div>
        </div>
        <div className="w-[62px] border-r border-black pl-[3px] font-bold leading-[18px] pt-[1px]">
          <div>Halbleiter</div>
          <div>Halbleiter</div>
        </div>
        <div className="w-[122px] border-r border-black pl-[4px] font-bold leading-[18px] pt-[1px] whitespace-nowrap">
          <div>ISIN: DE0006231004</div>
          <div>SYMBOL: C23100</div>
        </div>
      </div>

      {/* price pane */}
      <div className="flex h-[605px] border-b border-black">
        <div className="w-[82px] flex-none border-r border-black">
          {sideRows.map((s, i) => (
            <div key={i} className={`${s.h} border-b border-black`}>
              <div className="relative -top-[2px]">
                {s.rows.map((r, k) => (
                  <SideCell key={k} row={r} />
                ))}
              </div>
            </div>
          ))}
        </div>
        <div className="relative w-[1768px] flex-none border-r border-black">
          <PriceChart />
          <svg width="1767" height="12" viewBox="82 614 1767 12" className="block" shapeRendering="crispEdges">
            {statusBar.map(([a, b, c], i) => (
              <rect key={i} x={a} y="614" width={b - a} height="12" fill={c === 'r' ? '#ff0000' : '#00ff00'} />
            ))}
          </svg>
          <div className="h-[18px] whitespace-nowrap pl-[2px] text-[12.32px] leading-[17px]">
            <span className="text-[#0000ff]">FML_Bollinger(Close,20,1,2.00) BB:17,1411</span>
            {' - BBo:19,1275 - BBu:15,1547 - FML_GannHL(3) Kurs:17,1480 - '}
            <span className="text-[#0000ff]">FML_HeikinAshi HAClose:16,65</span>
            {' - '}
            <span className="text-[#ff0000]">HAHigh:17,29</span>
            {' - '}
            <span className="text-[#ff8080]">HALow:16,50</span>
            {' - '}
            <span className="text-[#80ff80]">HAOpen:17,29</span>
            {' - FML_TEMA_RSL_HL(5) TEMARSLHL:16,5000 - '}
            <span className="text-[#008000]">FML_Timeseries(Close,5) Timeseries:16,1378</span>
            {' - Kurs:16,526 '}
            <span className="font-bold">(-0,430 / -2,536%)</span>
          </div>
          <div className="absolute right-[1px] top-[1px] h-[11px] w-[11px]">
            <CloseBox />
          </div>
        </div>
        <div className="relative flex-1">
          <span className="absolute left-[4px] top-[2px]">Euro</span>
          {priceTicks.map((p) => (
            <span key={p} className="absolute right-[24px] leading-[14px]" style={{ top: priceY(p) - 48 }}>
              {priceLabel(p)}
            </span>
          ))}
        </div>
      </div>

      {/* oscillator pane */}
      <div className="flex h-[202px] border-b border-black">
        <div className="relative w-[82px] flex-none overflow-hidden border-r border-black">
          <span className="absolute right-[9px] top-[1px] whitespace-nowrap leading-[14px]">FML_DSSBR_C</span>
          {oscTicks.map(([t, y]) => (
            <span key={t} className="absolute right-[8px] leading-[14px]" style={{ top: y - 652 }}>
              {t}
            </span>
          ))}
        </div>
        <div className="relative w-[1768px] flex-none border-r border-black">
          <OscChart />
          <div className="h-[18px] whitespace-nowrap border-y border-black pr-[14px] text-right text-[12.25px] leading-[15px]">
            FML_DSSBR(20,4) DSS (Bressert):62,7685 - FML_DSSBR_C(20,4,14) DSS (Bressert)[R]:62,7685 - DSTOC[R]:56,3249 -{' '}
            <span className="text-[#80ff80]">StochRSI14[R]:25,0000 -</span> <span className="text-[#ff80c0]">- 100-Stoch[R]:75,0000</span>
          </div>
          <div className="flex">
            {tabs.map((t) => (
              <Tab key={t.label} {...t} />
            ))}
          </div>
          <div className="absolute right-[1px] top-[2px] h-[11px] w-[11px]">
            <CloseBox />
          </div>
        </div>
        <div className="relative flex-1">
          {oscTicksRight.map(([t, y]) => (
            <span key={t} className="absolute right-[18px] leading-[14px]" style={{ top: y - 652 }}>
              {t}
            </span>
          ))}
          <span className="absolute left-[4px] top-[55px] bg-black px-[1px] font-bold leading-[14px] text-white">62,7685</span>
        </div>
      </div>

      {/* time axis */}
      <div className="flex h-[35px] border-b border-black">
        <div className="w-[82px] flex-none border-r border-black" />
        <div className="w-[1768px] flex-none border-r border-black">
          <div className="flex h-[18px] border-b border-black">
            {months.map((m, i) => (
              <div
                key={i}
                className={i === months.length - 1 ? 'flex-none pl-[2px] leading-[17px]' : 'flex-none border-r border-black pl-[2px] leading-[17px]'}
                style={{ width: m.w }}
              >
                {m.label}
              </div>
            ))}
          </div>
          <div className="flex h-[16px] leading-[16px]">
            <div className="w-[65px] flex-none pl-[1px]">26.09.2018</div>
            <div className="flex w-[17px] flex-none items-center justify-center bg-[#f0f0f0]">
              <ChevronLeft size={11} strokeWidth={3.5} color="#606060" />
            </div>
            <div className="flex-1" />
            <div className="w-[81px] flex-none bg-[#c8c8c8]" />
            <div className="flex w-[16px] flex-none items-center justify-center bg-[#f0f0f0]">
              <ChevronRight size={11} strokeWidth={3.5} color="#606060" />
            </div>
            <div className="w-[66px] flex-none whitespace-nowrap pl-[2px]">25.09.2019</div>
          </div>
        </div>
        <div className="flex-1 text-center leading-[17px]">
          <div>LOG</div>
          <div className="whitespace-nowrap">T:16.09.19</div>
        </div>
      </div>
    </div>
  );
}
